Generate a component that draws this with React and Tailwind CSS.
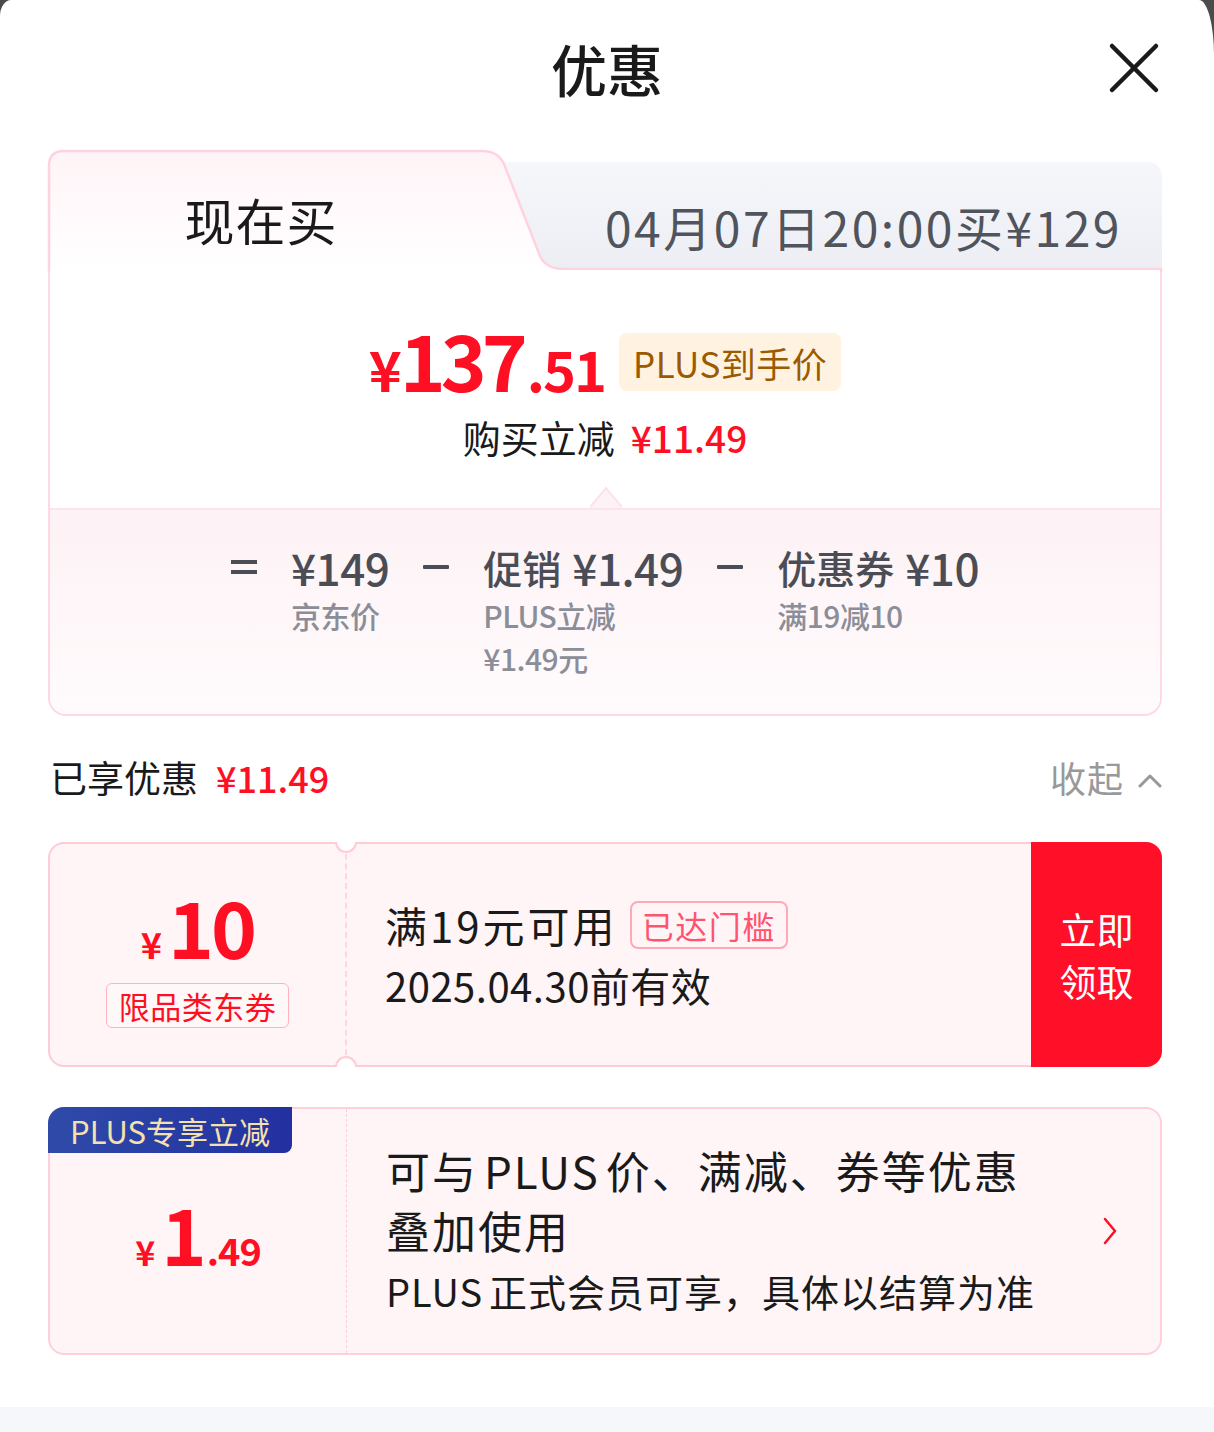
import React from "react";

const TabShape = () => (
  <svg
    className="absolute inset-0 overflow-visible"
    width="1114"
    height="122"
    viewBox="0 0 1114 122"
  >
    <defs>
      <linearGradient id="inactive" x1="0" y1="0" x2="0" y2="1">
        <stop offset="0" stopColor="#f6f7fb" />
        <stop offset="1" stopColor="#eceef4" />
      </linearGradient>
      <linearGradient id="active" x1="0" y1="0" x2="0" y2="1">
        <stop offset="0" stopColor="#fff4f7" />
        <stop offset="1" stopColor="#ffffff" />
      </linearGradient>
    </defs>
    <path d="M440 12 H1098 Q1114 12 1114 28 V120 H440 Z" fill="url(#inactive)" />
    <path
      d="M0 122 V16 Q0 0 16 0 H434 Q451 0 457 14 L493 106 Q499 120 516 120 H1114 V122 Z"
      fill="url(#active)"
    />
    <path
      d="M1 122 V16 Q1 1 16 1 H434 Q450 1 456 14 L492 106 Q498 119 516 119 H1113 V122"
      fill="none"
      stroke="#ffd3de"
      strokeWidth="2.5"
    />
  </svg>
);

const Notch = ({ bottom }) => (
  <div
    className={
      "absolute left-[285px] w-[22px] h-[13px] overflow-hidden " +
      (bottom ? "bottom-[-2px]" : "top-[-2px]")
    }
  >
    <div
      className={
        "absolute left-0 w-[22px] h-[22px] rounded-full bg-white border-2 border-[#ffcbd6] " +
        (bottom ? "top-[2px]" : "top-[-11px]")
      }
    />
  </div>
);

const Item = ({ label, value, lines }) => (
  <div className="flex flex-col">
    <div className="h-[52px] flex items-center leading-none font-medium text-[#4a4d56]">
      {label && <span className="text-[39px] mr-[11px]">{label}</span>}
      <span className="text-[44px] tracking-[-0.5px]">{value}</span>
    </div>
    {lines.map((l) => (
      <div
        key={l}
        className="h-[43px] flex items-center text-[30px] leading-none font-medium text-[#8b8e98] tracking-[-0.5px]"
      >
        {l}
      </div>
    ))}
  </div>
);

const Minus = () => (
  <div className="h-[52px] flex items-center">
    <div className="w-[26px] h-[4px] bg-[#4a4d56] rounded-[1px]" />
  </div>
);

export default function App() {
  return (
    <div className="w-[1214px] h-[1432px] bg-[#4b4b4b] font-['Noto_Sans_CJK_SC',sans-serif]">
      <div className="h-full bg-white rounded-tl-[11px_16px] rounded-tr-[15px_55px] flex flex-col">
        {/* header */}
        <div className="relative h-[136px] flex items-center justify-center">
          <h1 className="text-[56px] leading-none font-medium text-[#1a1a1a]">优惠</h1>
          <svg
            className="absolute right-[54px] top-[42px]"
            width="52"
            height="52"
            viewBox="0 0 52 52"
          >
            <path
              d="M4 4 L48 48 M48 4 L4 48"
              stroke="#1a1a1a"
              strokeWidth="4.5"
              strokeLinecap="round"
            />
          </svg>
        </div>

        {/* price card */}
        <div className="mt-[14px] ml-12 w-[1114px]">
          <div className="relative h-[120px] flex">
            <TabShape />
            <div className="relative w-[426px] flex items-center justify-center pt-[18px] text-[50px] leading-none text-[#1a1a1a] tracking-[1px]">
              现在买
            </div>
            <div className="relative flex-1 flex items-center justify-end pr-[40px] pt-[32px] text-[48px] leading-none text-[#50545c] tracking-[2.5px]">
              04月07日20:00买¥129
            </div>
          </div>
          <div className="border-x-2 border-b-2 border-[#ffd9e2] rounded-b-[18px] overflow-hidden">
            <div className="relative h-[238px] bg-white flex flex-col items-center pt-[49px]">
              <div className="flex items-end">
                <div className="font-bold leading-none text-[#ff0f23] tracking-[-2px]">
                  <span className="text-[56px]">¥</span>
                  <span className="text-[78px] tracking-[-5px]">137</span>
                  <span className="text-[56px] ml-[4px]">.51</span>
                </div>
                <div className="ml-[14px] mb-[6px] h-[58px] px-[14px] rounded-[8px] bg-[#fff2e0] text-[#9b5a00] text-[35px] flex items-center leading-none tracking-[0.5px]">
                  PLUS到手价
                </div>
              </div>
              <div className="mt-[22px] text-[38px] leading-[36px] text-[#1a1a1a] flex">
                <span>购买立减</span>
                <span className="ml-[16px] text-[37px] font-medium text-[#ff0f23]">¥11.49</span>
              </div>
              <svg
                className="absolute bottom-0 left-[540px]"
                width="32"
                height="22"
                viewBox="0 0 32 22"
              >
                <path d="M0 22 L16 2 L32 22 Z" fill="#fdf2f5" />
                <path d="M0 21 L16 2 L32 21" fill="none" stroke="#fde2e9" strokeWidth="2" />
              </svg>
            </div>
            <div className="h-[206px] border-t-2 border-[#fde4ea] bg-gradient-to-b from-[#fdf2f5] to-[#fffbfc] pt-[31px] flex justify-center gap-[34px]">
              <div className="h-[52px] flex flex-col justify-center gap-[6px]">
                <div className="w-[26px] h-[4px] bg-[#4a4d56]" />
                <div className="w-[26px] h-[4px] bg-[#4a4d56]" />
              </div>
              <Item value="¥149" lines={["京东价"]} />
              <Minus />
              <Item label="促销" value="¥1.49" lines={["PLUS立减", "¥1.49元"]} />
              <Minus />
              <Item label="优惠券" value="¥10" lines={["满19减10"]} />
            </div>
          </div>
        </div>

        {/* enjoyed */}
        <div className="mt-[31px] ml-[50px] mr-[52px] h-[60px] flex items-center justify-between">
          <div className="flex items-center text-[37px] leading-none text-[#1a1a1a]">
            <span>已享优惠</span>
            <span className="ml-[18px] text-[36px] font-medium text-[#ff0f23]">¥11.49</span>
          </div>
          <div className="flex items-center text-[36px] leading-none text-[#999999]">
            <span className="tracking-[1px]">收起</span>
            <svg className="ml-[14px] mt-[6px]" width="24" height="16" viewBox="0 0 24 16">
              <path
                d="M2 14 L12 4 L22 14"
                fill="none"
                stroke="#999999"
                strokeWidth="3"
                strokeLinecap="round"
                strokeLinejoin="round"
              />
            </svg>
          </div>
        </div>

        {/* coupon 1 */}
        <div className="relative mt-[35px] ml-12 w-[1114px] h-[225px] flex rounded-[16px] border-2 border-[#ffcbd6] bg-[#fff4f6]">
          <Notch />
          <Notch bottom />
          <div className="w-[295px] flex flex-col items-center justify-center pt-[4px]">
            <div className="font-bold leading-none text-[#ff0f23]">
              <span className="text-[36px]">¥</span>
              <span className="text-[78px] ml-[6px] tracking-[-3px]">10</span>
            </div>
            <div className="mt-[19px] h-[45px] px-[12px] rounded-[6px] border border-[#ffb3c1] bg-white/40 flex items-center text-[31px] leading-none text-[#ff0f23] tracking-[0.5px]">
              限品类东券
            </div>
          </div>
          <div className="border-l-2 border-dashed border-[#ffd6de]" />
          <div className="flex-1 pl-[38px] flex flex-col justify-center">
            <div className="h-[60px] flex items-center text-[42px] leading-none text-[#1a1a1a]">
              <span className="tracking-[3px]">满19元可用</span>
              <span className="ml-[12px] h-[48px] px-[10px] rounded-[8px] border-2 border-[#ffa9b8] flex items-center text-[32px] leading-none text-[#ff5470] tracking-[1.5px]">
                已达门槛
              </span>
            </div>
            <div className="h-[60px] flex items-center text-[40px] leading-none text-[#1a1a1a] tracking-[0.5px]">
              2025.04.30前有效
            </div>
          </div>
          <div className="-my-[2px] -mr-[2px] w-[131px] rounded-r-[16px] bg-[#ff1028] flex flex-col items-center justify-center text-[37px] leading-[52px] text-white">
            <span>立即</span>
            <span>领取</span>
          </div>
        </div>

        {/* coupon 2 */}
        <div className="relative mt-[40px] ml-12 w-[1114px] h-[248px] flex rounded-[16px] border-2 border-[#ffd0da] bg-[#fff5f7]">
          <div className="absolute top-[-2px] left-[-2px] w-[244px] h-[46px] rounded-tl-[16px] rounded-br-[8px] bg-gradient-to-r from-[#2f4aa8] to-[#2330a0] flex items-center justify-center text-[31px] leading-none text-[#f6e1ae]">
            PLUS专享立减
          </div>
          <div className="w-[296px] flex items-center justify-center pt-[2px]">
            <div className="font-bold leading-none text-[#ff0f23]">
              <span className="text-[34px]">¥</span>
              <span className="text-[77px] ml-[6px]">1</span>
              <span className="text-[38px] tracking-[-1px]">.49</span>
            </div>
          </div>
          <div className="border-l border-dashed border-[#ffcfd9]" />
          <div className="flex-1 pl-[39px] flex flex-col justify-center text-[#1a1a1a]">
            <div className="h-[60px] flex items-center text-[44px] leading-none tracking-[2px]">
              <span>可与</span>
              <span className="mx-[6px]">PLUS</span>
              <span>价、满减、券等优惠</span>
            </div>
            <div className="h-[60px] flex items-center text-[44px] leading-none tracking-[2px]">
              叠加使用
            </div>
            <div className="h-[62px] flex items-center text-[38px] leading-none tracking-[1px]">
              <span>PLUS</span>
              <span className="ml-[6px]">正式会员可享，具体以结算为准</span>
            </div>
          </div>
          <div className="w-[80px] flex items-center justify-center pr-[20px]">
            <svg width="16" height="28" viewBox="0 0 16 28">
              <path
                d="M3 2 L13 14 L3 26"
                fill="none"
                stroke="#ff0f23"
                strokeWidth="2.5"
                strokeLinecap="round"
                strokeLinejoin="round"
              />
            </svg>
          </div>
        </div>

        <div className="flex-1" />
        <div className="h-[25px] bg-[#f6f7fb]" />
      </div>
    </div>
  );
}
